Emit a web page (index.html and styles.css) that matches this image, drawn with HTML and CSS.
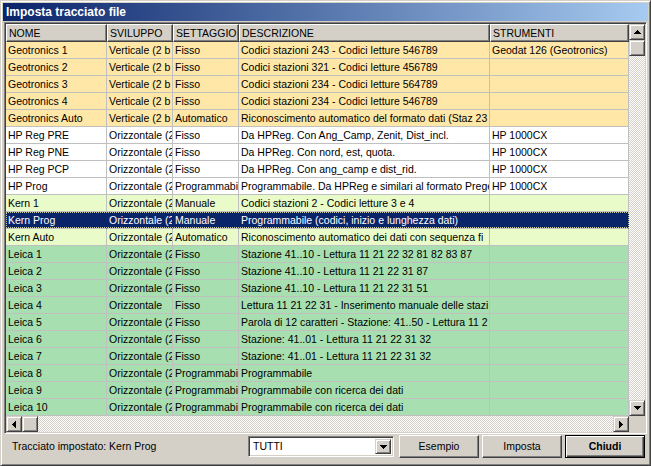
FILE: index.html
```html
<!DOCTYPE html>
<html>
<head>
<meta charset="utf-8">
<link rel="stylesheet" href="styles.css">
</head>
<body>
<div class="window">
  <div class="titlebar">Imposta tracciato file</div>
  <div class="gridbox">
    <div class="toparea">
      <div class="table">
        <div class="hdr">
          <div class="hc">NOME</div><div class="hc">SVILUPPO</div><div class="hc">SETTAGGIO</div><div class="hc">DESCRIZIONE</div><div class="hc">STRUMENTI</div>
        </div>
        <div class="row geo"><div class="c">Geotronics 1</div><div class="c">Verticale (2 b</div><div class="c">Fisso</div><div class="c">Codici stazioni 243 - Codici letture 546789</div><div class="c">Geodat 126 (Geotronics)</div></div>
        <div class="row geo"><div class="c">Geotronics 2</div><div class="c">Verticale (2 b</div><div class="c">Fisso</div><div class="c">Codici stazioni 321 - Codici letture 456789</div><div class="c"></div></div>
        <div class="row geo"><div class="c">Geotronics 3</div><div class="c">Verticale (2 b</div><div class="c">Fisso</div><div class="c">Codici stazioni 234 - Codici letture 564789</div><div class="c"></div></div>
        <div class="row geo"><div class="c">Geotronics 4</div><div class="c">Verticale (2 b</div><div class="c">Fisso</div><div class="c">Codici stazioni 234 - Codici letture 546789</div><div class="c"></div></div>
        <div class="row geo"><div class="c">Geotronics Auto</div><div class="c">Verticale (2 b</div><div class="c">Automatico</div><div class="c">Riconoscimento automatico del formato dati (Staz 23</div><div class="c"></div></div>
        <div class="row hp"><div class="c">HP Reg PRE</div><div class="c">Orizzontale (2</div><div class="c">Fisso</div><div class="c">Da HPReg. Con Ang_Camp, Zenit, Dist_incl.</div><div class="c">HP 1000CX</div></div>
        <div class="row hp"><div class="c">HP Reg PNE</div><div class="c">Orizzontale (2</div><div class="c">Fisso</div><div class="c">Da HPReg. Con nord, est, quota.</div><div class="c">HP 1000CX</div></div>
        <div class="row hp"><div class="c">HP Reg PCP</div><div class="c">Orizzontale (2</div><div class="c">Fisso</div><div class="c">Da HPReg. Con ang_camp e dist_rid.</div><div class="c">HP 1000CX</div></div>
        <div class="row hp"><div class="c">HP Prog</div><div class="c">Orizzontale (2</div><div class="c">Programmabil</div><div class="c">Programmabile. Da HPReg e similari al formato Prege</div><div class="c">HP 1000CX</div></div>
        <div class="row kern"><div class="c">Kern 1</div><div class="c">Orizzontale (2</div><div class="c">Manuale</div><div class="c">Codici stazioni 2 - Codici letture 3 e 4</div><div class="c"></div></div>
        <div class="row sel"><div class="c">Kern Prog</div><div class="c">Orizzontale (2</div><div class="c">Manuale</div><div class="c">Programmabile (codici, inizio e lunghezza dati)</div><div class="c"></div></div>
        <div class="row kern"><div class="c">Kern Auto</div><div class="c">Orizzontale (2</div><div class="c">Automatico</div><div class="c">Riconoscimento automatico dei dati con sequenza fi</div><div class="c"></div></div>
        <div class="row lei"><div class="c">Leica 1</div><div class="c">Orizzontale (2</div><div class="c">Fisso</div><div class="c">Stazione 41..10 - Lettura 11 21 22 32 81 82 83 87</div><div class="c"></div></div>
        <div class="row lei"><div class="c">Leica 2</div><div class="c">Orizzontale (2</div><div class="c">Fisso</div><div class="c">Stazione 41..10 - Lettura 11 21 22 31 87</div><div class="c"></div></div>
        <div class="row lei"><div class="c">Leica 3</div><div class="c">Orizzontale (2</div><div class="c">Fisso</div><div class="c">Stazione 41..10 - Lettura 11 21 22 31 51</div><div class="c"></div></div>
        <div class="row lei"><div class="c">Leica 4</div><div class="c">Orizzontale</div><div class="c">Fisso</div><div class="c">Lettura 11 21 22 31 - Inserimento manuale delle stazi</div><div class="c"></div></div>
        <div class="row lei"><div class="c">Leica 5</div><div class="c">Orizzontale (2</div><div class="c">Fisso</div><div class="c">Parola di 12 caratteri - Stazione: 41..50 - Lettura 11 2</div><div class="c"></div></div>
        <div class="row lei"><div class="c">Leica 6</div><div class="c">Orizzontale (2</div><div class="c">Fisso</div><div class="c">Stazione: 41..01 - Lettura 11 21 22 31 32</div><div class="c"></div></div>
        <div class="row lei"><div class="c">Leica 7</div><div class="c">Orizzontale (2</div><div class="c">Fisso</div><div class="c">Stazione: 41..01 - Lettura 11 21 22 31 32</div><div class="c"></div></div>
        <div class="row lei"><div class="c">Leica 8</div><div class="c">Orizzontale (2</div><div class="c">Programmabil</div><div class="c">Programmabile</div><div class="c"></div></div>
        <div class="row lei"><div class="c">Leica 9</div><div class="c">Orizzontale (2</div><div class="c">Programmabil</div><div class="c">Programmabile con ricerca dei dati</div><div class="c"></div></div>
        <div class="row lei"><div class="c">Leica 10</div><div class="c">Orizzontale (2</div><div class="c">Programmabil</div><div class="c">Programmabile con ricerca dei dati</div><div class="c"></div></div>
      </div>
      <div class="vscroll">
        <div class="sbtn"><svg width="7" height="4" viewBox="0 0 7 4" shape-rendering="crispEdges"><rect x="3" y="0" width="1" height="1"/><rect x="2" y="1" width="3" height="1"/><rect x="1" y="2" width="5" height="1"/><rect x="0" y="3" width="7" height="1"/></svg></div>
        <div class="sbtn"></div>
        <div class="track"></div>
        <div class="sbtn"><svg width="7" height="4" viewBox="0 0 7 4" shape-rendering="crispEdges"><rect x="0" y="0" width="7" height="1"/><rect x="1" y="1" width="5" height="1"/><rect x="2" y="2" width="3" height="1"/><rect x="3" y="3" width="1" height="1"/></svg></div>
      </div>
    </div>
    <div class="bottomarea">
      <div class="hscroll">
        <div class="sbtn"><svg width="4" height="7" viewBox="0 0 4 7" shape-rendering="crispEdges"><rect x="0" y="3" width="1" height="1"/><rect x="1" y="2" width="1" height="3"/><rect x="2" y="1" width="1" height="5"/><rect x="3" y="0" width="1" height="7"/></svg></div>
        <div class="sbtn"></div>
        <div class="track"></div>
        <div class="sbtn"><svg width="4" height="7" viewBox="0 0 4 7" shape-rendering="crispEdges"><rect x="0" y="0" width="1" height="7"/><rect x="1" y="1" width="1" height="5"/><rect x="2" y="2" width="1" height="3"/><rect x="3" y="3" width="1" height="1"/></svg></div>
      </div>
      <div class="corner"></div>
    </div>
  </div>
  <div class="footer">
    <div class="label">Tracciato impostato: Kern Prog</div>
    <div class="combo">
      <div class="combotext">TUTTI</div>
      <div class="sbtn combobtn"><svg width="7" height="4" viewBox="0 0 7 4" shape-rendering="crispEdges"><rect x="0" y="0" width="7" height="1"/><rect x="1" y="1" width="5" height="1"/><rect x="2" y="2" width="3" height="1"/><rect x="3" y="3" width="1" height="1"/></svg></div>
    </div>
    <div class="btn">Esempio</div>
    <div class="btn">Imposta</div>
    <div class="btn default">Chiudi</div>
  </div>
</div>
</body>
</html>
```
FILE: styles.css
```css
html, body {
  margin: 0;
  padding: 0;
  background: #D4D0C8;
}
body {
  font-family: "Liberation Sans", Arial, sans-serif;
  font-size: 10.5px;
  color: #000;
}
.window {
  width: 651px;
  height: 466px;
  box-sizing: border-box;
  border: 1px solid;
  border-color: #D4D0C8 #404040 #404040 #D4D0C8;
  box-shadow: inset 1px 1px #FFFFFF, inset -1px -1px #808080;
  padding: 2px;
  display: flex;
  flex-direction: column;
  background: #D4D0C8;
}
.titlebar {
  height: 18px;
  flex: none;
  background: linear-gradient(to right, #0A246A, #A6CAF0);
  color: #fff;
  font-weight: bold;
  font-size: 12px;
  line-height: 18px;
  padding-left: 3px;
  white-space: nowrap;
}
.gridbox {
  margin: 1px 1px 0 1px;
  border: 1px solid;
  border-color: #808080 #FFFFFF #FFFFFF #808080;
  box-shadow: inset 1px 1px #404040, inset -1px -1px #D4D0C8;
  padding: 1px;
  display: flex;
  flex-direction: column;
  flex: none;
}
.toparea {
  display: flex;
  height: 392px;
}
.table {
  width: 623px;
  background: #fff;
}
.hdr, .row {
  display: grid;
  grid-template-columns: 101px 66px 66px 251px 139px;
}
.hdr {
  height: 18px;
}
.hc {
  box-sizing: border-box;
  border: 1px solid;
  border-color: #FFFFFF #404040 #404040 #FFFFFF;
  box-shadow: inset -1px -1px #808080;
  background: #D4D0C8;
  padding-left: 2px;
  padding-top: 1px;
  line-height: 15px;
  white-space: nowrap;
  overflow: hidden;
}
.row {
  height: 17px;
  position: relative;
}
.c {
  box-sizing: border-box;
  border-right: 1px solid #C0C0C0;
  border-bottom: 1px solid #C0C0C0;
  padding-left: 2px;
  line-height: 16px;
  white-space: nowrap;
  overflow: hidden;
}
.geo { background: #FFE7A8; }
.hp { background: #FFFFFF; }
.kern { background: #E8FBC8; }
.lei { background: #A8DFB0; }
.sel {
  background: #0A246A;
  color: #fff;
}
.sel .c {
  border-right-color: #0A246A;
  border-bottom-color: #C0C0C0;
}
.sel::after {
  content: "";
  position: absolute;
  left: 0;
  top: 0;
  right: 0;
  bottom: 1px;
  border: 1px dotted #C8C8A0;
  pointer-events: none;
}
.vscroll {
  width: 16px;
  display: flex;
  flex-direction: column;
}
.sbtn {
  width: 16px;
  height: 16px;
  box-sizing: border-box;
  flex: none;
  background: #D4D0C8;
  border: 1px solid;
  border-color: #D4D0C8 #404040 #404040 #D4D0C8;
  box-shadow: inset 1px 1px #FFFFFF, inset -1px -1px #808080;
  display: flex;
  align-items: center;
  justify-content: center;
}
.sbtn svg { fill: #000; display: block; }
.track {
  flex: 1;
  background-color: #D4D0C8;
  background-image: conic-gradient(#FFFFFF 25%, #D4D0C8 0 50%, #FFFFFF 0 75%, #D4D0C8 0);
  background-size: 2px 2px;
}
.bottomarea {
  display: flex;
  height: 16px;
}
.hscroll {
  width: 623px;
  display: flex;
}
.corner {
  width: 16px;
  background: #D4D0C8;
}
.footer {
  flex: 1;
  display: flex;
  align-items: flex-start;
  padding: 1px 3px 0 9px;
}
.label {
  flex: 1;
  line-height: 23px;
  white-space: nowrap;
}
.combo {
  width: 146px;
  height: 21px;
  margin-top: 1px;
  box-sizing: border-box;
  border: 1px solid;
  border-color: #808080 #FFFFFF #FFFFFF #808080;
  box-shadow: inset 1px 1px #404040, inset -1px -1px #D4D0C8;
  background: #fff;
  padding: 2px;
  display: flex;
  margin-right: 2px;
}
.combotext {
  flex: 1;
  line-height: 15px;
  padding-left: 2px;
}
.combobtn {
  height: 15px;
}
.btn {
  width: 80px;
  height: 23px;
  box-sizing: border-box;
  border: 1px solid;
  border-color: #FFFFFF #404040 #404040 #FFFFFF;
  box-shadow: inset -1px -1px #808080;
  background: #D4D0C8;
  text-align: center;
  line-height: 21px;
  margin-left: 3px;
}
.btn:first-of-type { margin-left: 0; }
.default {
  border-color: #000;
  box-shadow: inset 1px 1px #FFFFFF, inset -1px -1px #404040, inset -2px -2px #808080;
  font-weight: bold;
}
```
